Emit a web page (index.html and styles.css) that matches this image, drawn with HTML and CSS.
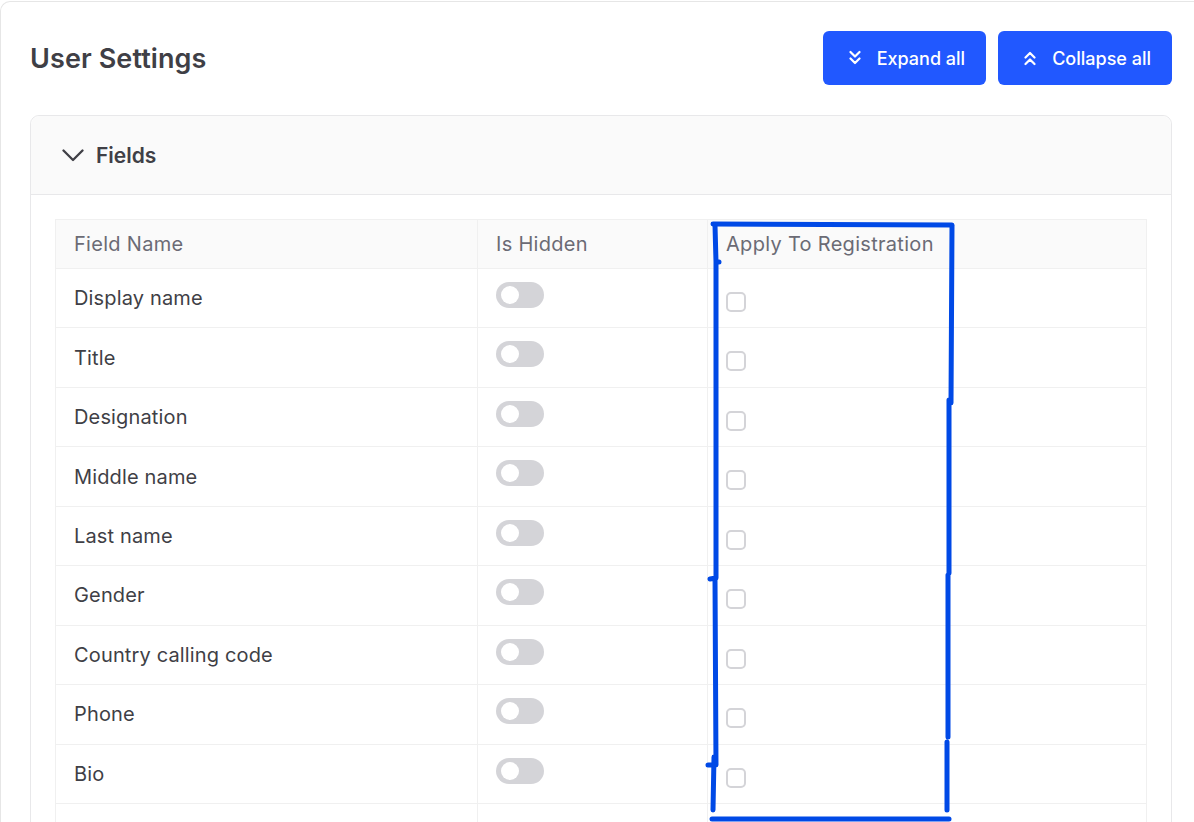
FILE: index.html
```html
<!DOCTYPE html>
<html lang="en">
<head>
<meta charset="utf-8">
<title>User Settings</title>
<link rel="stylesheet" href="styles.css">
</head>
<body>
<div class="page">
  <div class="topbar">
    <h1 class="title">User Settings</h1>
    <div class="actions">
      <button class="btn">
        <svg class="btn-icon" viewBox="0 0 12 16" width="12" height="16"><path d="M1.5 2l4.5 4.5L10.5 2M1.5 8.5L6 13l4.5-4.5" fill="none" stroke="#fff" stroke-width="2.2" stroke-linecap="round" stroke-linejoin="round"/></svg>
        Expand all
      </button>
      <button class="btn">
        <svg class="btn-icon" viewBox="0 0 12 16" width="12" height="16"><path d="M1.5 7.5L6 3l4.5 4.5M1.5 14L6 9.5l4.5 4.5" fill="none" stroke="#fff" stroke-width="2.2" stroke-linecap="round" stroke-linejoin="round"/></svg>
        Collapse all
      </button>
    </div>
  </div>

  <section class="panel">
    <div class="panel-head">
      <svg class="chev" viewBox="0 0 22 13" width="22" height="13"><path d="M1.5 1.5l9.5 9.5 9.5-9.5" fill="none" stroke="#3f3f46" stroke-width="2.3" stroke-linecap="round" stroke-linejoin="round"/></svg>
      <span class="panel-title">Fields</span>
    </div>
    <div class="panel-body">
      <div class="table">
        <div class="row head">
          <div class="cell">Field Name</div>
          <div class="cell">Is Hidden</div>
          <div class="cell">Apply To Registration</div>
        </div>
        <div class="row"><div class="cell">Display name</div><div class="cell c-toggle"><span class="toggle"></span></div><div class="cell c-check"><span class="check"></span></div></div>
        <div class="row"><div class="cell">Title</div><div class="cell c-toggle"><span class="toggle"></span></div><div class="cell c-check"><span class="check"></span></div></div>
        <div class="row"><div class="cell">Designation</div><div class="cell c-toggle"><span class="toggle"></span></div><div class="cell c-check"><span class="check"></span></div></div>
        <div class="row"><div class="cell">Middle name</div><div class="cell c-toggle"><span class="toggle"></span></div><div class="cell c-check"><span class="check"></span></div></div>
        <div class="row"><div class="cell">Last name</div><div class="cell c-toggle"><span class="toggle"></span></div><div class="cell c-check"><span class="check"></span></div></div>
        <div class="row"><div class="cell">Gender</div><div class="cell c-toggle"><span class="toggle"></span></div><div class="cell c-check"><span class="check"></span></div></div>
        <div class="row"><div class="cell">Country calling code</div><div class="cell c-toggle"><span class="toggle"></span></div><div class="cell c-check"><span class="check"></span></div></div>
        <div class="row"><div class="cell">Phone</div><div class="cell c-toggle"><span class="toggle"></span></div><div class="cell c-check"><span class="check"></span></div></div>
        <div class="row"><div class="cell">Bio</div><div class="cell c-toggle"><span class="toggle"></span></div><div class="cell c-check"><span class="check"></span></div></div>
        <div class="row"><div class="cell"></div><div class="cell c-toggle"></div><div class="cell c-check"></div></div>
      </div>
    </div>
  </section>
</div>

<svg class="annotation" viewBox="0 0 1194 822" width="1194" height="822">
  <g fill="none" stroke="#0049e6" stroke-width="5" stroke-linecap="round" stroke-linejoin="round">
    <path d="M713 224 L952 225"/>
    <path d="M715 225 L716 262 L719 262 M716 262 L716 578 L710 579 M715 579 L716 765 L708 765 M714 757 L713 810"/>
    <path d="M952 226 L951 403 M949 400 L949 573 M948 575 L948 737 M947 742 L947 810"/>
    <path d="M712 819 L949 819"/>
  </g>
</svg>
</body>
</html>
```

FILE: styles.css
```css
* { box-sizing: border-box; }

html, body {
  margin: 0;
  padding: 0;
  background: #ffffff;
}

body {
  font-family: Inter, "Noto Sans", "Liberation Sans", sans-serif;
  color: #3f3f46;
  width: 1194px;
  height: 822px;
  overflow: hidden;
  position: relative;
}

.page {
  margin-top: 1px;
  border-top: 1px solid #e6e6e6;
  border-left: 1px solid #e6e6e6;
  border-radius: 10px 0 0 0;
  padding: 29px 22px 0 29px;
  min-height: 900px;
}

.topbar {
  display: flex;
  align-items: center;
  justify-content: space-between;
  height: 54px;
}

.title {
  margin: 0;
  font-size: 27px;
  font-weight: 600;
  color: #3f3f46;
  letter-spacing: 0.1px;
}

.actions {
  display: flex;
  gap: 12px;
}

.btn {
  display: flex;
  align-items: center;
  gap: 16px;
  height: 54px;
  padding: 0 21px 0 26px;
  background: #2158ff;
  color: #ffffff;
  border: none;
  border-radius: 6px;
  font-family: inherit;
  font-size: 18px;
  font-weight: 500;
}

.btn-icon { display: block; }

.panel {
  margin-top: 30px;
  border: 1px solid #e8e8ea;
  border-radius: 9px 9px 0 0;
}

.panel-head {
  display: flex;
  align-items: center;
  gap: 12px;
  height: 79px;
  padding-left: 31px;
  background: #fafafa;
  border-bottom: 1px solid #e8e8ea;
  border-radius: 9px 9px 0 0;
}

.chev { display: block; margin-top: 1px; }

.panel-title {
  font-size: 21px;
  font-weight: 600;
  color: #3f3f46;
}

.panel-body {
  padding: 24px 24px 0 24px;
}

.table {
  border-left: 1px solid #f0f0f0;
  border-right: 1px solid #f0f0f0;
}

.row {
  display: grid;
  grid-template-columns: 422px 230px 1fr;
  height: 59.45px;
  border-bottom: 1px solid #f0f0f0;
}

.row.head {
  height: 50px;
  background: #fafafa;
  border-top: 1px solid #f0f0f0;
  color: #6b6b75;
}

.cell {
  display: flex;
  align-items: center;
  padding: 0 18px;
  font-size: 20px;
  letter-spacing: 0.15px;
  border-right: 1px solid #f0f0f0;
}

.row.head .cell { letter-spacing: 0.3px; }

.cell:last-child { border-right: none; }

.cell.c-toggle {
  align-items: flex-start;
  padding-top: 13px;
}

.cell.c-check {
  align-items: flex-start;
  padding-top: 23px;
}

.toggle {
  position: relative;
  display: block;
  width: 48px;
  height: 26px;
  border-radius: 13px;
  background: #d4d4d8;
}

.toggle::after {
  content: "";
  position: absolute;
  left: 5px;
  top: 4px;
  width: 18px;
  height: 18px;
  border-radius: 50%;
  background: #ffffff;
}

.check {
  display: block;
  width: 20px;
  height: 20px;
  border: 2px solid #d4d4d8;
  border-radius: 5px;
  background: #fff;
}

.annotation {
  position: absolute;
  left: 0;
  top: 0;
  pointer-events: none;
}
```
